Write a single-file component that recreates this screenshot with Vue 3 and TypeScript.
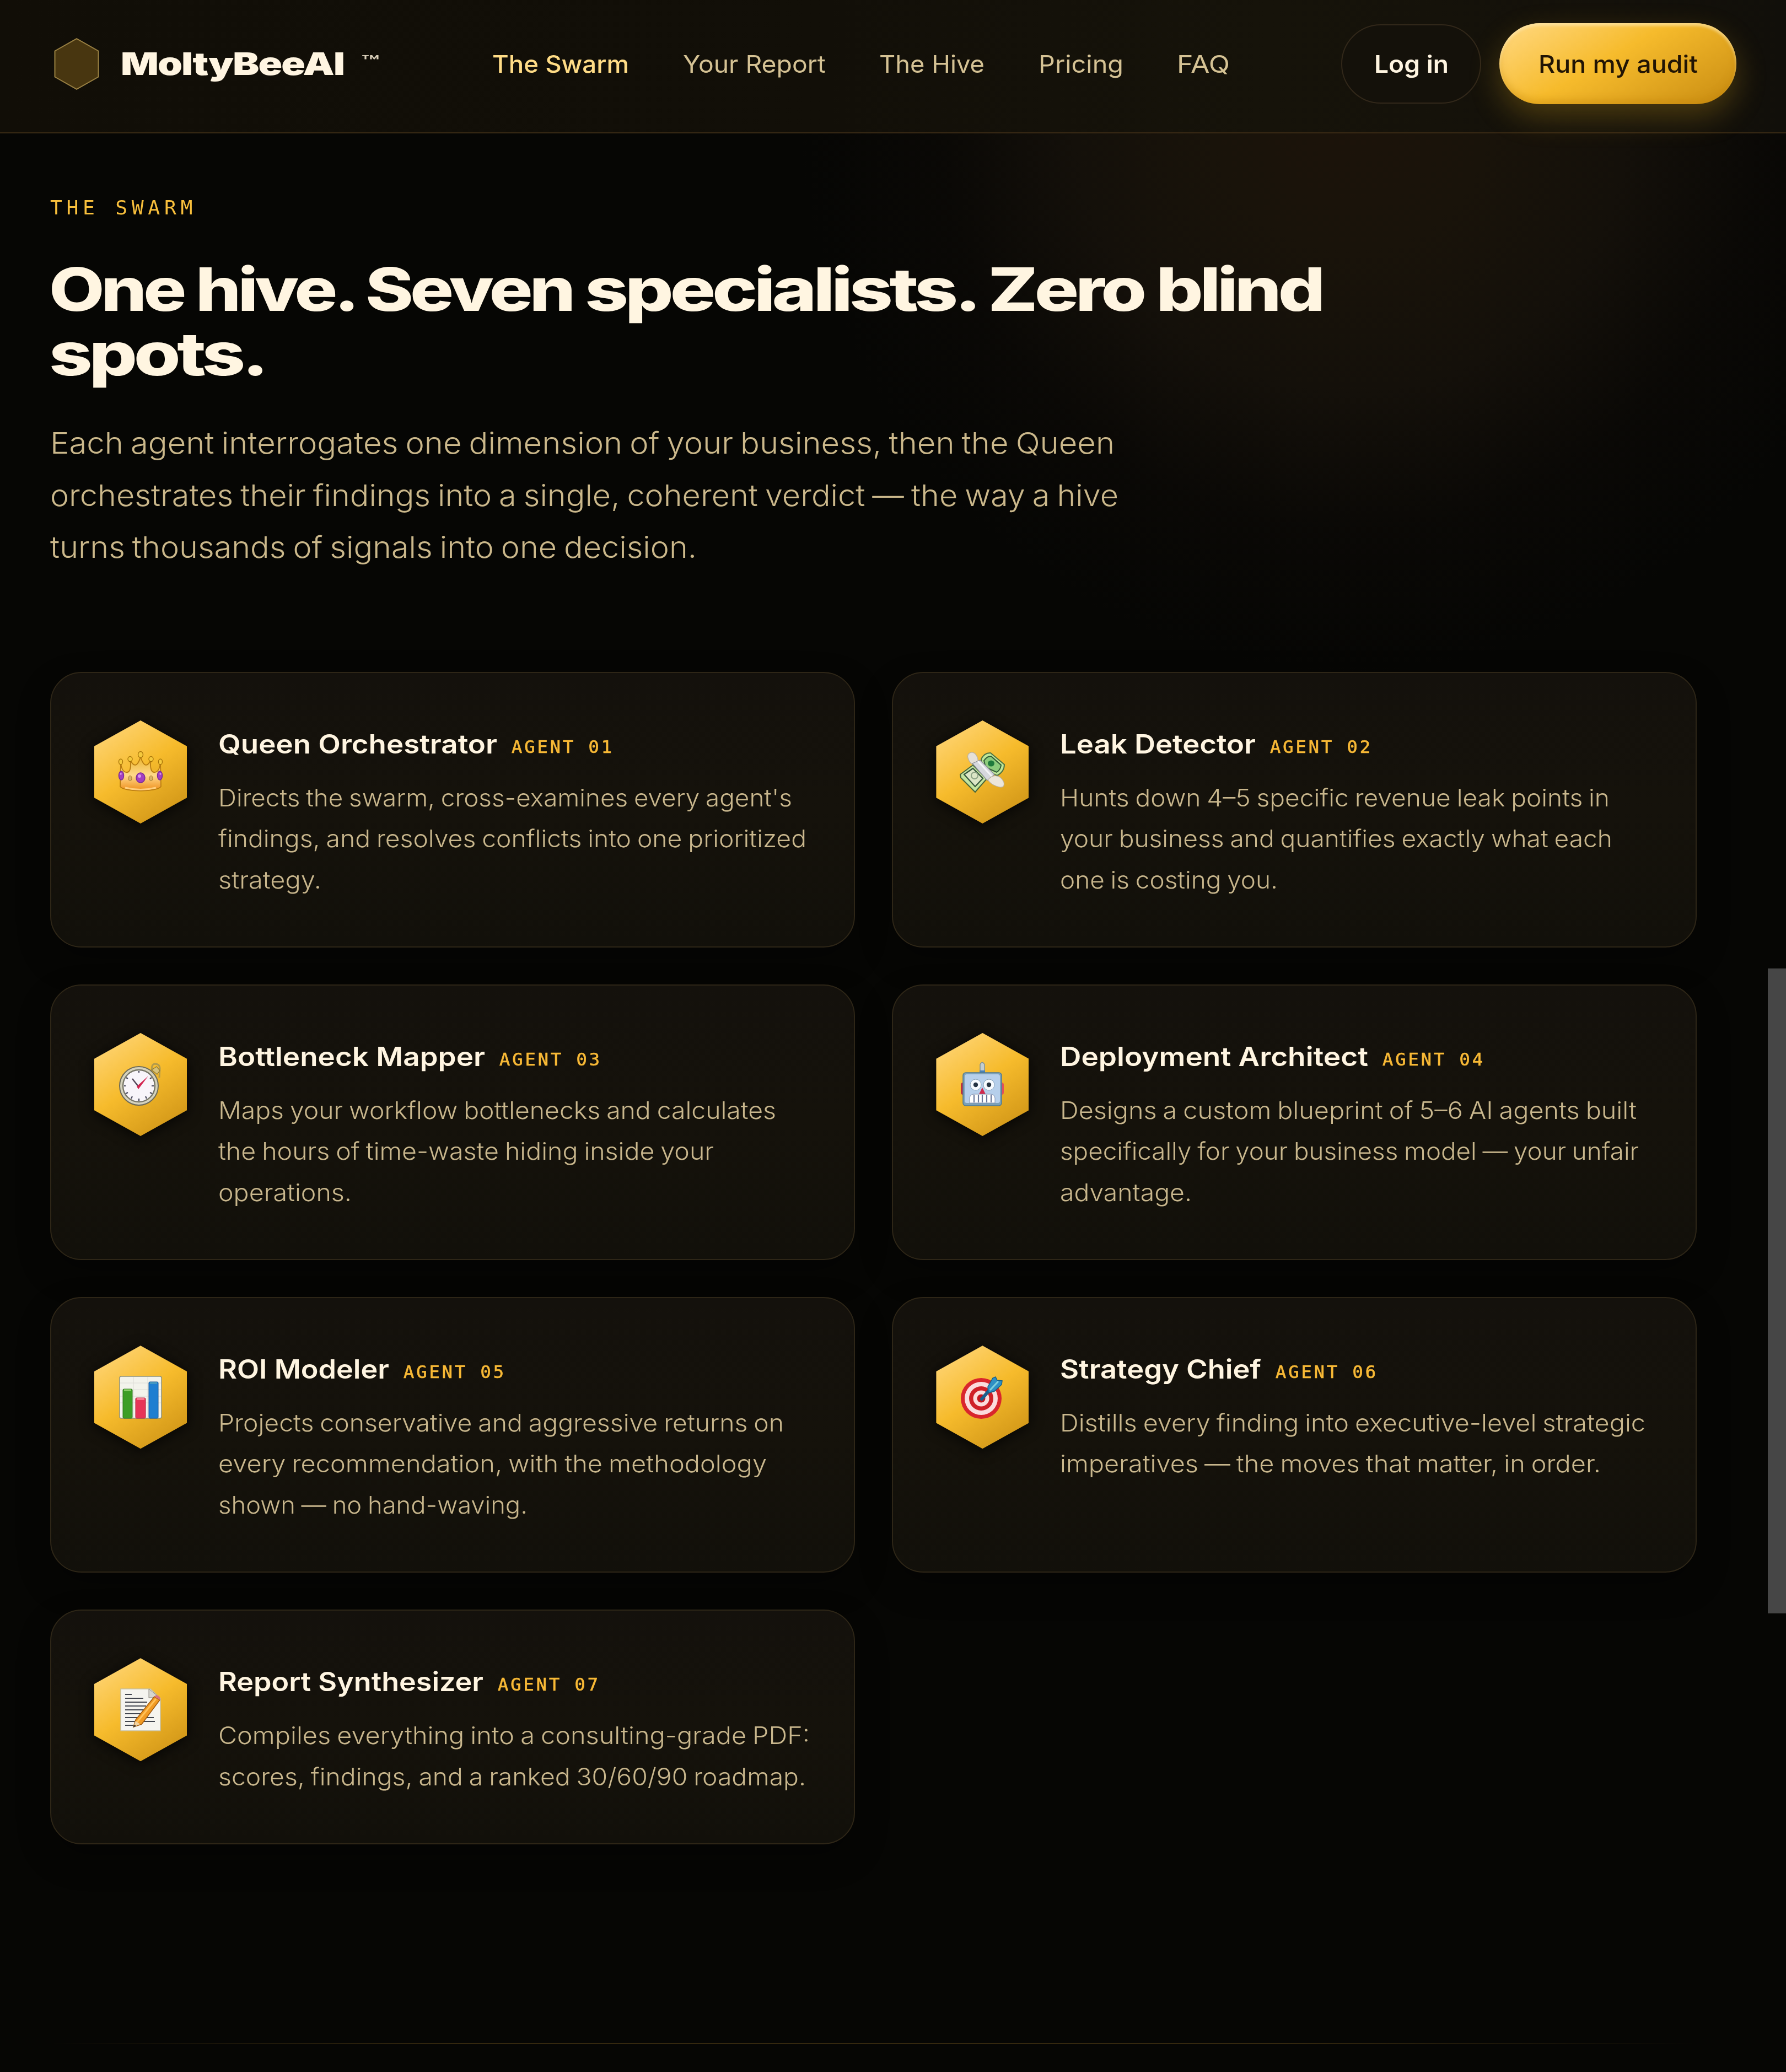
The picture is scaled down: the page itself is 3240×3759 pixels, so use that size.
<script setup lang="ts">
interface Line {
  text: string
  width: number
}
interface Agent {
  icon: string
  name: Line
  tag: string
  lines: Line[]
}

// Stretches a line of text so that it spans the given measure.
const vFit = {
  mounted(el: HTMLElement, binding: { value: number }) {
    const natural = el.getBoundingClientRect().width
    el.style.transform = `scaleX(${binding.value / natural})`
    el.style.marginRight = `${binding.value - natural}px`
  },
}

const links: (Line & { active?: boolean })[] = [
  { text: 'The Swarm', width: 248, active: true },
  { text: 'Your Report', width: 259 },
  { text: 'The Hive', width: 191 },
  { text: 'Pricing', width: 154 },
  { text: 'FAQ', width: 96 },
]

const headline: Line[][] = [
  [
    { text: 'One hive. ', width: 574 },
    { text: 'Seven ', width: 398 },
    { text: 'specialists. ', width: 731 },
    { text: 'Zero blind', width: 606 },
  ],
  [{ text: 'spots.', width: 392 }],
]

const lead: Line[] = [
  { text: 'Each agent interrogates one dimension of your business, then the Queen', width: 1931 },
  { text: 'orchestrates their findings into a single, coherent verdict — the way a hive', width: 1938 },
  { text: 'turns thousands of signals into one decision.', width: 1173 },
]

const agents: Agent[] = [
  {
    icon: 'crown', name: { text: 'Queen Orchestrator', width: 506 }, tag: 'AGENT 01',
    lines: [
      { text: "Directs the swarm, cross-examines every agent's", width: 1041 },
      { text: 'findings, and resolves conflicts into one prioritized', width: 1067 },
      { text: 'strategy.', width: 187 },
    ],
  },
  {
    icon: 'money', name: { text: 'Leak Detector', width: 355 }, tag: 'AGENT 02',
    lines: [
      { text: 'Hunts down 4–5 specific revenue leak points in', width: 997 },
      { text: 'your business and quantifies exactly what each', width: 1002 },
      { text: 'one is costing you.', width: 395 },
    ],
  },
  {
    icon: 'watch', name: { text: 'Bottleneck Mapper', width: 484 }, tag: 'AGENT 03',
    lines: [
      { text: 'Maps your workflow bottlenecks and calculates', width: 1012 },
      { text: 'the hours of time-waste hiding inside your', width: 899 },
      { text: 'operations.', width: 242 },
    ],
  },
  {
    icon: 'robot', name: { text: 'Deployment Architect', width: 559 }, tag: 'AGENT 04',
    lines: [
      { text: 'Designs a custom blueprint of 5–6 AI agents built', width: 1046 },
      { text: 'specifically for your business model — your unfair', width: 1050 },
      { text: 'advantage.', width: 239 },
    ],
  },
  {
    icon: 'chart', name: { text: 'ROI Modeler', width: 310 }, tag: 'AGENT 05',
    lines: [
      { text: 'Projects conservative and aggressive returns on', width: 1026 },
      { text: 'every recommendation, with the methodology', width: 995 },
      { text: 'shown — no hand-waving.', width: 561 },
    ],
  },
  {
    icon: 'target', name: { text: 'Strategy Chief', width: 365 }, tag: 'AGENT 06',
    lines: [
      { text: 'Distills every finding into executive-level strategic', width: 1062 },
      { text: 'imperatives — the moves that matter, in order.', width: 981 },
    ],
  },
  {
    icon: 'memo', name: { text: 'Report Synthesizer', width: 481 }, tag: 'AGENT 07',
    lines: [
      { text: 'Compiles everything into a consulting-grade PDF:', width: 1073 },
      { text: 'scores, findings, and a ranked 30/60/90 roadmap.', width: 1066 },
    ],
  },
]
</script>

<template>
  <div class="page">
    <header class="topbar">
      <a class="brand">
        <svg class="brand-mark" viewBox="0 0 82 94" width="82" height="94">
          <path d="M41 1.200 80.500 23.500V70.500L41 92.800 1.500 70.500V23.500Z" fill="#483610" stroke="#9a8143" stroke-width="2" />
        </svg>
        <span v-fit="405" class="brand-name fit">MoltyBeeAI</span>
        <span v-fit="34" class="tm fit">™</span>
      </a>
      <nav class="links">
        <a v-for="l in links" :key="l.text" v-fit="l.width" class="link fit" :class="{ active: l.active }">{{ l.text }}</a>
      </nav>
      <div class="actions">
        <button class="btn ghost"><span v-fit="135" class="fit">Log in</span></button>
        <button class="btn gold"><span v-fit="289" class="fit">Run my audit</span></button>
      </div>
    </header>

    <main class="swarm">
      <p class="eyebrow"><span v-fit="266" class="fit">THE SWARM</span></p>
      <h1 class="title">
        <span v-for="(words, i) in headline" :key="i" class="title-row">
          <span v-for="w in words" :key="w.text" v-fit="w.width" class="fit">{{ w.text }}</span>
        </span>
      </h1>
      <p class="lead">
        <span v-for="l in lead" :key="l.text" class="row"><span v-fit="l.width" class="fit">{{ l.text }}</span></span>
      </p>

      <section class="grid">
        <article v-for="a in agents" :key="a.tag" class="card">
          <div class="hex-wrap">
            <div class="hex">
              <svg v-if="a.icon === 'crown'" class="emoji" viewBox="0 0 80 80">
                <defs>
                  <linearGradient id="cr" x1="0" y1="0" x2="0" y2="1">
                    <stop offset="0" stop-color="#e9b32c" /><stop offset=".55" stop-color="#ffd98a" /><stop offset="1" stop-color="#ef8f1c" />
                  </linearGradient>
                </defs>
                <path d="M4 22C5 34 9 41 16 40 22 39 23 28 21 17 27 30 34 32 40 12 46 32 53 30 59 17 57 28 58 39 64 40 71 41 75 34 76 22L77 66C70 76 10 76 3 66Z" fill="url(#cr)" stroke="#b97c10" stroke-width="1.800" />
                <path d="M12 68Q40 75 68 68" fill="none" stroke="#ffcf7d" stroke-width="3" />
                <g fill="#f5c93d" stroke="#a87509" stroke-width="1.400">
                  <ellipse cx="4" cy="21" rx="3.500" ry="5" /><ellipse cx="21" cy="16" rx="4" ry="4.500" /><ellipse cx="40" cy="8" rx="4.500" ry="5.500" /><ellipse cx="59" cy="16" rx="4" ry="4.500" /><ellipse cx="76" cy="21" rx="3.500" ry="5" />
                </g>
                <g fill="#a23fc0" stroke="#7a2a96" stroke-width="1.500">
                  <ellipse cx="40" cy="50" rx="8" ry="9" /><ellipse cx="5" cy="46" rx="4.500" ry="8" /><ellipse cx="75" cy="46" rx="4.500" ry="8" />
                </g>
                <g fill="#d998ea"><circle cx="38" cy="47" r="3" /><circle cx="4" cy="43" r="1.800" /><circle cx="76" cy="43" r="1.800" /></g>
                <g fill="#d9b26a" stroke="#a87b2a"><ellipse cx="21" cy="51" rx="3" ry="4.500" /><ellipse cx="59" cy="51" rx="3" ry="4.500" /></g>
              </svg>

              <svg v-else-if="a.icon === 'money'" class="emoji" viewBox="0 0 80 80">
                <path d="M14 14C11 4 24 0 29 9 33 15 33 22 30 29 21 27 16 22 14 14Z" fill="#e6e0d6" stroke="#b8b0a0" stroke-width="1.200" />
                <path d="M38 16Q44 4 55 5L80 26Q80 39 67 46L42 35Z" fill="#bfe79a" stroke="#4f7342" stroke-width="2" />
                <path d="M43 19Q49 10 56 11L74 27Q73 36 66 40L46 31Z" fill="#8ccb7c" stroke="#2f5a35" stroke-width="2" />
                <ellipse cx="56" cy="24" rx="6" ry="5.500" fill="#1f7a3c" />
                <path d="M0 44 23 27 48 52 27 76 1 50Z" fill="#c3e4a0" stroke="#47663b" stroke-width="2" />
                <path d="M7 44 23 33 41 51 27 66Z" fill="#dce6c6" stroke="#33553a" stroke-width="2.200" />
                <circle cx="26" cy="46" r="6" fill="none" stroke="#8fa487" stroke-width="2" />
                <path d="M22 24 36 18 62 44 49 55Z" fill="#d6d8dd" stroke="#8c8f98" stroke-width="1.200" />
                <path d="M32 20 58 48" stroke="#f4f5f7" stroke-width="3" />
                <path d="M50 54C58 44 69 44 76 53 82 61 80 68 72 67 62 65 55 61 50 54Z" fill="#ece6da" stroke="#b8b0a0" stroke-width="1.200" />
              </svg>

              <svg v-else-if="a.icon === 'watch'" class="emoji" viewBox="0 0 80 80">
                <path d="M61 14Q59 3 66 2 75 2 75 11L74 27" fill="none" stroke="#b29a4c" stroke-width="3" />
                <path d="M60 13 69 7 75 14 70 21Z" fill="#d8c27a" stroke="#8d7631" stroke-width="1.200" />
                <circle cx="37" cy="42" r="35" fill="#d5d2bd" stroke="#6c6a59" stroke-width="2" />
                <circle cx="37" cy="42" r="29" fill="#f8f5fa" stroke="#777667" stroke-width="2.400" />
                <g stroke="#46465a" stroke-width="2.200"><path d="M37 65v4M37 15v3M60 42h4M10 42h3M49 61l2 4M25 61l-2 4M57 54l4 2M17 54l-4 2M57 29l3-2M17 29l-3-2" /></g>
                <path d="M25 29 36 43" stroke="#54485a" stroke-width="2.500" />
                <path d="M54 24 36 48 33 43Z" fill="#d32550" />
              </svg>

              <svg v-else-if="a.icon === 'robot'" class="emoji" viewBox="0 0 80 80">
                <path d="M36 22V3Q40-4 44 3V22Z" fill="#c4ced0" stroke="#7d9098" stroke-width="1.500" />
                <rect x="35" y="14" width="10" height="5" fill="#4b82b5" />
                <rect x="1" y="36" width="10" height="22" rx="4" fill="#c12f3e" /><rect x="69" y="36" width="10" height="22" rx="4" fill="#e0505c" />
                <rect x="5" y="18" width="70" height="60" rx="5" fill="#7ba0b8" stroke="#4f7a93" stroke-width="1.500" />
                <rect x="8" y="21" width="64" height="52" rx="4" fill="#b6cfeb" />
                <circle cx="28" cy="40" r="10" fill="#f7fbff" stroke="#88a2b8" /><circle cx="52" cy="40" r="10" fill="#f7fbff" stroke="#88a2b8" />
                <circle cx="28" cy="40" r="4.200" fill="#253342" /><circle cx="52" cy="40" r="4.200" fill="#253342" />
                <path d="M40 45 46 57H34Z" fill="#d02a4e" />
                <path d="M17 73V64Q18 57 25 57H55Q62 57 63 64V73Z" fill="#fff" stroke="#7f8fae" />
                <path d="M25 58V72M33 58V72M40 58V72M48 58V72M56 58V72" stroke="#68779b" stroke-width="2.200" />
              </svg>

              <svg v-else-if="a.icon === 'chart'" class="emoji" viewBox="0 0 80 80">
                <rect x="2" y="2" width="76" height="76" rx="3" fill="#f3f3ec" stroke="#8d927e" stroke-width="1.500" />
                <path d="M3 14H77M3 26H77M3 38H77M3 50H77M27 3V77M53 3V77" stroke="#dcdcd6" />
                <rect x="8" y="25" width="17" height="53" rx="2" fill="#3d9e26" stroke="#267217" />
                <rect x="31" y="41" width="18" height="37" rx="2" fill="#e63457" stroke="#b21f3d" />
                <rect x="55" y="12" width="17" height="66" rx="2" fill="#1f7fd1" stroke="#125393" />
                <path d="M10 27H23" stroke="#8fd06e" stroke-width="3" /><path d="M33 43H47" stroke="#ff8ba0" stroke-width="3" /><path d="M57 14H70" stroke="#4f9fc0" stroke-width="3" />
              </svg>

              <svg v-else-if="a.icon === 'target'" class="emoji" viewBox="0 0 80 80">
                <circle cx="38" cy="42" r="37" fill="#d9262c" />
                <circle cx="38" cy="42" r="30" fill="#fbdcdc" />
                <circle cx="38" cy="42" r="22" fill="#cf2027" />
                <circle cx="38" cy="42" r="14.500" fill="#fbdcdc" />
                <circle cx="38" cy="42" r="7.500" fill="#c4161e" />
                <path d="M39 43 60 19" stroke="#1b5e8d" stroke-width="6" stroke-linecap="round" />
                <path d="M50 21 59 5 64 3 67 9 76 10 75 17 62 29 51 32Z" fill="#2f8fc4" stroke="#166087" stroke-width="1.500" />
                <path d="M54 27 69 11" stroke="#7fd0dc" stroke-width="3" />
              </svg>

              <svg v-else class="emoji" viewBox="0 0 80 80">
                <path d="M4 2H58L76 19V78H4Z" fill="#f5f4ef" stroke="#c6bf9f" stroke-width="1.500" />
                <path d="M55 2V18H75Z" fill="#d7d6cf" stroke="#8a8980" />
                <g stroke="#42464f" stroke-width="2.200"><path d="M12 12H24M12 19H45M12 26H52M12 33H50M12 40H46M12 47H43M12 54H64M12 61H66M12 68H30" /></g>
                <path d="M65 16 75 22 42 66 27 71 31 58Z" fill="#f29b24" stroke="#a15a0d" stroke-width="1.500" />
                <path d="M68 20 34 62" stroke="#ffc25a" stroke-width="3" />
                <path d="M65 16 68 13Q75 14 76 20L75 22Z" fill="#d9737b" />
                <path d="M31 60 39 66 27 71Z" fill="#f3d3a0" /><path d="M29 67 32 69 26 72Z" fill="#333" />
              </svg>
            </div>
          </div>
          <div class="copy">
            <h3 class="name">
              <span v-fit="a.name.width" class="fit">{{ a.name.text }}</span>
              <span class="tag"><span v-fit="186" class="fit">{{ a.tag }}</span></span>
            </h3>
            <p class="desc">
              <span v-for="l in a.lines" :key="l.text" class="row"><span v-fit="l.width" class="fit">{{ l.text }}</span></span>
            </p>
          </div>
        </article>
      </section>
    </main>

    <hr class="divider" />
    <div class="scroll-thumb"></div>
  </div>
</template>

<style>
html,
body {
  margin: 0;
  background: #060604;
}
</style>

<style scoped>
.page {
  position: relative;
  box-sizing: border-box;
  width: 3240px;
  height: 3759px;
  overflow: hidden;
  color: #fff5e1;
  font-family: Inter, 'Liberation Sans', sans-serif;
  background:
    radial-gradient(ellipse 1000px 1020px at 2450px 200px, #1c130a 0%, #19130a 25%, #14100a 50%, rgba(11, 9, 6, 0.8) 75%, rgba(6, 6, 4, 0) 100%),
    #060604;
}
.fit {
  display: inline-block;
  white-space: pre;
  transform-origin: 0 50%;
}
.row {
  display: block;
  white-space: nowrap;
}
.topbar {
  box-sizing: border-box;
  display: flex;
  align-items: center;
  height: 242px;
  padding: 0 90px 9px 98px;
  border-bottom: 2px solid #382914;
  background: linear-gradient(90deg, #110e07 0, #120f08 1500px, #16130a 2300px, #14110a 2900px, #110f0a 3240px);
}
.brand {
  display: flex;
  align-items: center;
  width: 795px;
}
.brand-mark {
  flex: none;
}
.brand-name {
  margin-left: 39px;
  font-size: 57px;
  font-weight: 900;
  line-height: 70px;
  letter-spacing: -1.500px;
}
.tm {
  margin: -10px 0 0 31px;
  font-size: 30px;
  font-weight: 600;
  line-height: 30px;
  color: #d8cdb8;
}
.links {
  display: flex;
  gap: 97.500px;
}
.link {
  font-size: 44px;
  line-height: 60px;
  color: #d5c294;
}
.link.active {
  font-weight: 500;
  color: #ffdc86;
}
.actions {
  display: flex;
  align-items: center;
  gap: 33px;
  margin-left: auto;
}
.btn {
  box-sizing: border-box;
  display: flex;
  align-items: center;
  justify-content: center;
  margin: 0;
  padding: 0;
  border: 0;
  border-radius: 74px;
  font: 500 44px/60px Inter, sans-serif;
}
.ghost {
  width: 254px;
  height: 144px;
  border: 2px solid #32281a;
  background: #14110a;
  font-weight: 600;
  color: #fff5e1;
}
.gold {
  width: 430px;
  height: 147px;
  color: #211404;
  background: linear-gradient(150deg, #ffd67a 5%, #f6bb2c 45%, #cc9014 95%);
  box-shadow:
    inset 0 5px 5px rgba(255, 238, 190, 0.6),
    inset 0 -8px 14px rgba(190, 125, 5, 0.35),
    0 22px 55px rgba(240, 180, 30, 0.26);
}
.swarm {
  padding: 115px 163px 0 91px;
}
.eyebrow {
  height: 40px;
  margin: 0;
  font: 400 36px/40px 'DejaVu Sans Mono', monospace;
  letter-spacing: 7.500px;
  color: #f8bf3c;
}
.title {
  margin: 69px 0 0;
  font-size: 108px;
  font-weight: 800;
  line-height: 117px;
  letter-spacing: -5px;
}
.title-row {
  display: flex;
  height: 117px;
  margin-left: -2px;
}
.lead {
  margin: 57px 0 0;
  font-size: 54px;
  font-weight: 300;
  line-height: 94.500px;
  word-spacing: -3px;
  color: #cbb88b;
}
.grid {
  display: grid;
  grid-template-columns: 1460px 1460px;
  gap: 67px 67.400px;
  margin-top: 178.500px;
}
.card {
  box-sizing: border-box;
  display: flex;
  gap: 57px;
  padding: 86px 0 83.500px 78px;
  border: 2px solid #2e2617;
  border-radius: 57px;
  background: linear-gradient(180deg, #14110c, #15120b 50%, #12100a);
  box-shadow: 0 24px 60px rgba(0, 0, 0, 0.3);
}
.hex-wrap {
  flex: none;
  height: 187px;
  filter: drop-shadow(0 4px 12px rgba(0, 0, 0, 0.75));
}
.hex {
  display: flex;
  align-items: center;
  justify-content: center;
  width: 168px;
  height: 187px;
  clip-path: polygon(50% 0, 100% 25%, 100% 75%, 50% 100%, 0 75%, 0 25%);
  background: linear-gradient(145deg, #ffd67a 5%, #f6bb2c 48%, #cd9215 95%);
}
.emoji {
  width: 80px;
  height: 80px;
  overflow: visible;
}
.copy {
  padding-top: 12.500px;
}
.name {
  display: flex;
  height: 60px;
  margin: 0;
  font-size: 48px;
  font-weight: 600;
  line-height: 60px;
}
.tag {
  margin-left: 26px;
  padding-top: 4px;
  font: 400 32px/63px 'DejaVu Sans Mono', monospace;
  letter-spacing: 4px;
  color: #f8b936;
  -webkit-text-stroke: 0.7px #f8b936;
}
.desc {
  margin: 30px 0 0;
  font-size: 44px;
  font-weight: 300;
  line-height: 74.700px;
  word-spacing: -2px;
  color: #c9b78d;
}
.divider {
  width: 2986px;
  height: 2px;
  margin: 360px 0 0 91px;
  border: 0;
  background: linear-gradient(90deg, transparent, #34280f 25%, #34280f 75%, transparent);
}
.scroll-thumb {
  position: absolute;
  top: 1757px;
  right: 0;
  width: 33px;
  height: 1170px;
  background: #464646;
}
</style>
